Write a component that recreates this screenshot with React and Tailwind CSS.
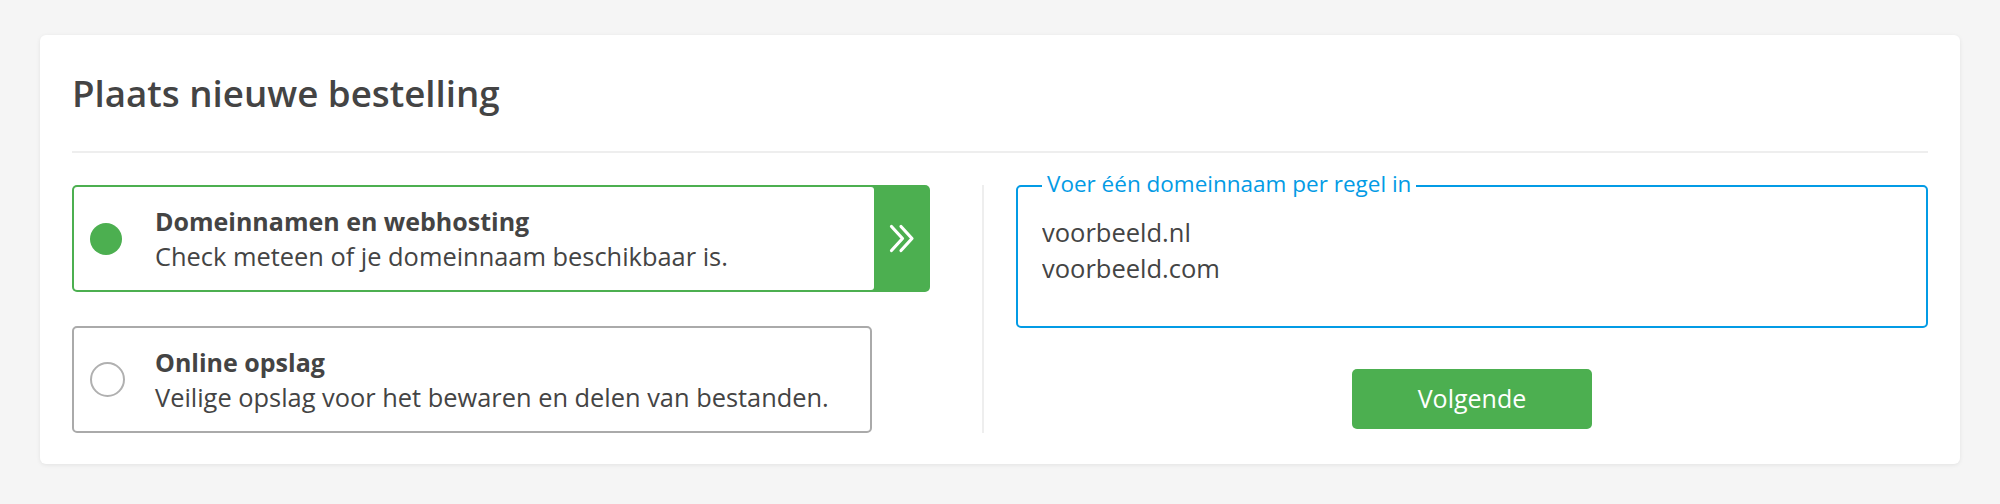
import React from "react";

const font = { fontFamily: '"Open Sans", "Noto Sans", sans-serif' };

function Chevrons() {
  return (
    <svg width="26" height="29" viewBox="0 0 26 29" fill="none">
      <polyline points="2.5,2.5 13.5,14.5 2.5,26.5" stroke="white" strokeWidth="3.2" strokeLinecap="round" strokeLinejoin="round" />
      <polyline points="12,2.5 23,14.5 12,26.5" stroke="white" strokeWidth="3.2" strokeLinecap="round" strokeLinejoin="round" />
    </svg>
  );
}

function OptionText({ title, desc }) {
  return (
    <div className="flex flex-col leading-[35px] text-[#444]">
      <span className="font-bold text-[25px]">{title}</span>
      <span className="text-[25.4px]">{desc}</span>
    </div>
  );
}

export default function App() {
  return (
    <div className="min-h-screen bg-[#f5f5f5] pt-[35px] px-[40px]" style={font}>
      <div className="bg-white rounded-[6px] shadow-[0_1px_4px_rgba(0,0,0,0.08)] px-[32px] pt-[35px] pb-[31px]">
        <h1 className="text-[36.7px] leading-[46px] font-semibold text-[#444]">Plaats nieuwe bestelling</h1>
        <div className="mt-[35px] h-[2px] bg-[#eeeeee]" />
        <div className="mt-[32px] flex">
          <div className="w-[910px] flex flex-col gap-[34px]">
            <div className="w-[858px] h-[107px] flex bg-[#4caf50] rounded-[5px] py-[2px] pl-[2px]">
              <div className="w-[800px] bg-white rounded-[3px] flex items-center pl-[16px]">
                <div className="w-[65px] shrink-0 flex items-center">
                  <div className="w-[32px] h-[32px] rounded-full bg-[#4caf50]" />
                </div>
                <OptionText title="Domeinnamen en webhosting" desc="Check meteen of je domeinnaam beschikbaar is." />
              </div>
              <div className="flex-1 flex items-center justify-center">
                <Chevrons />
              </div>
            </div>
            <div className="w-[800px] h-[107px] border-2 border-[#aaaaaa] rounded-[5px] flex items-center pl-[16px]">
              <div className="w-[65px] shrink-0 flex items-center">
                <div className="w-[35px] h-[35px] rounded-full border-2 border-[#b0b0b0]" />
              </div>
              <OptionText title="Online opslag" desc="Veilige opslag voor het bewaren en delen van bestanden." />
            </div>
          </div>
          <div className="flex-1 border-l-2 border-[#eeeeee] pl-[32px] flex flex-col">
            <fieldset className="border-2 border-[#039be5] rounded-[5px] px-[24px] pt-[11px] pb-[12px] -mt-[16px]">
              <legend className="px-[5px] pb-[4px] text-[22.5px] leading-[30px] text-[#039be5]">Voer één domeinnaam per regel in</legend>
              <textarea
                className="block w-full h-[100px] resize-none outline-none bg-transparent text-[25.5px] leading-[36px] text-[#444]"
                defaultValue={"voorbeeld.nl\nvoorbeeld.com"}
              />
            </fieldset>
            <div className="mt-[41px] flex justify-center">
              <button className="w-[240px] h-[60px] rounded-[5px] bg-[#4caf50] text-white text-[25px]">Volgende</button>
            </div>
          </div>
        </div>
      </div>
    </div>
  );
}
